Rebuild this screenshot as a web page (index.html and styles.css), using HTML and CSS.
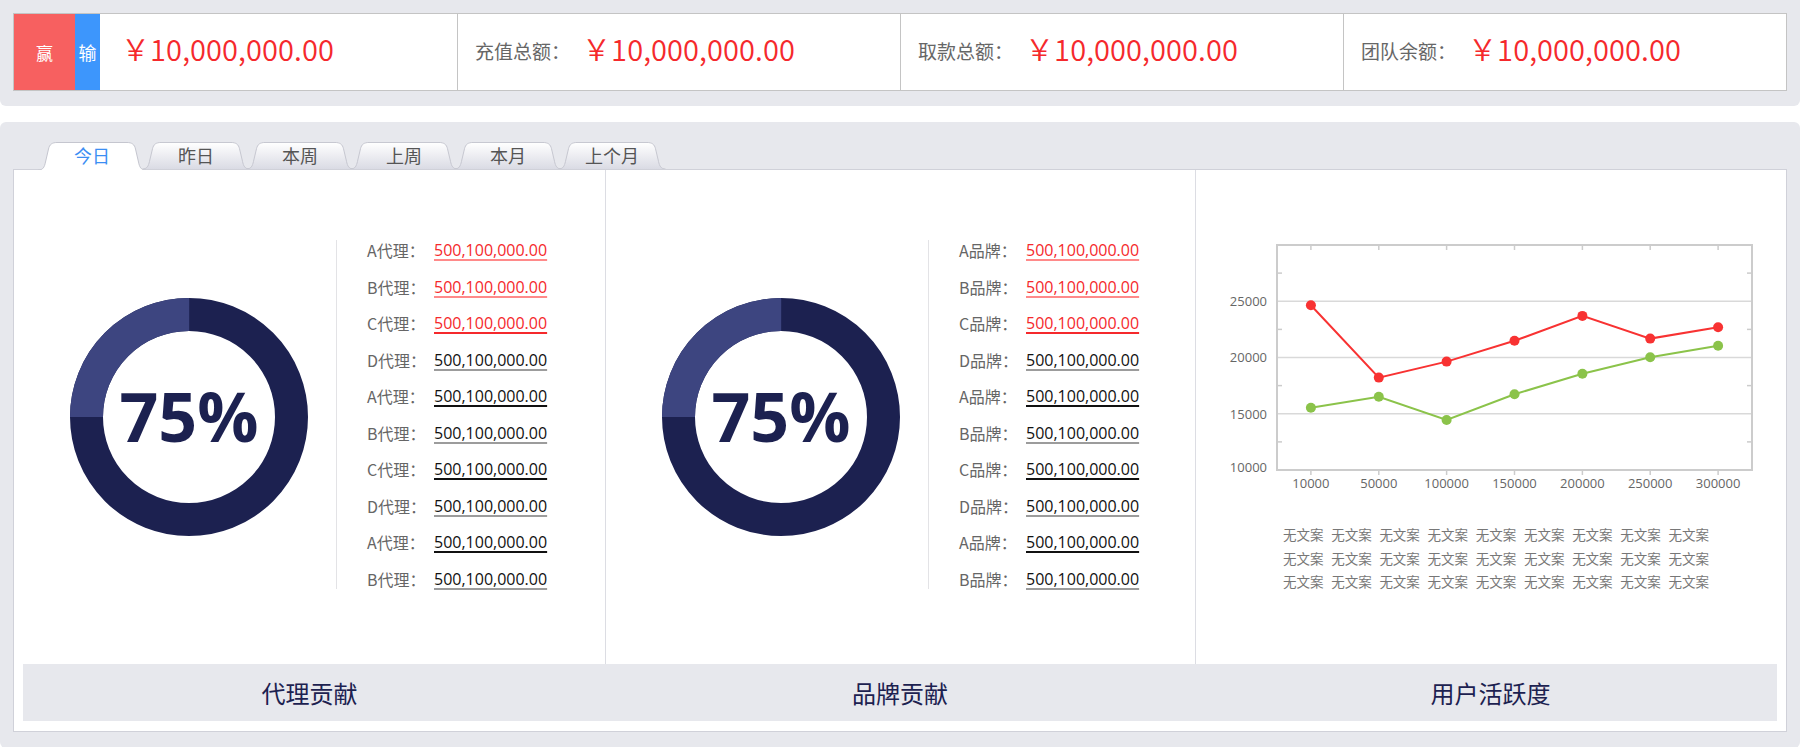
FILE: index.html
```html
<!DOCTYPE html>
<html lang="zh-CN">
<head>
<meta charset="utf-8">
<title>数据概览</title>
<link rel="stylesheet" href="styles.css">
</head>
<body>
<section class="panel panel-top">
  <div class="summary">
    <div class="cell cell-first">
      <span class="badge badge-win">赢</span>
      <span class="badge badge-lose">输</span>
      <span class="money money-main">￥10,000,000.00</span>
    </div>
    <div class="cell"><span class="cell-label">充值总额：</span><span class="money">￥10,000,000.00</span></div>
    <div class="cell"><span class="cell-label">取款总额：</span><span class="money">￥10,000,000.00</span></div>
    <div class="cell"><span class="cell-label">团队余额：</span><span class="money">￥10,000,000.00</span></div>
  </div>
</section>

<section class="panel panel-main">
  <nav class="tabs">
    <a class="tab active">
      <svg class="tab-bg" viewBox="0 0 108 28" preserveAspectRatio="none">
        <defs>
          <linearGradient id="tabg" x1="0" y1="0" x2="0" y2="1">
            <stop offset="0" stop-color="#ffffff"/>
            <stop offset="1" stop-color="#dadbe4"/>
          </linearGradient>
        </defs>
        <path class="tab-fill" d="M0.5 28 C5 28 6.5 25 7.5 20 L10.5 7 C11.5 2.5 14 0.5 19 0.5 L89 0.5 C94 0.5 96.5 2.5 97.5 7 L100.5 20 C101.5 25 103 28 107.5 28 Z"/>
        <path class="tab-line" d="M0.5 28 C5 28 6.5 25 7.5 20 L10.5 7 C11.5 2.5 14 0.5 19 0.5 L89 0.5 C94 0.5 96.5 2.5 97.5 7 L100.5 20 C101.5 25 103 28 107.5 28"/>
      </svg>
      <span class="tab-text">今日</span>
    </a>
    <a class="tab">
      <svg class="tab-bg" viewBox="0 0 108 28" preserveAspectRatio="none">
        <path class="tab-fill" d="M0.5 28 C5 28 6.5 25 7.5 20 L10.5 7 C11.5 2.5 14 0.5 19 0.5 L89 0.5 C94 0.5 96.5 2.5 97.5 7 L100.5 20 C101.5 25 103 28 107.5 28 Z"/>
        <path class="tab-line" d="M0.5 28 C5 28 6.5 25 7.5 20 L10.5 7 C11.5 2.5 14 0.5 19 0.5 L89 0.5 C94 0.5 96.5 2.5 97.5 7 L100.5 20 C101.5 25 103 28 107.5 28"/>
      </svg>
      <span class="tab-text">昨日</span>
    </a>
    <a class="tab">
      <svg class="tab-bg" viewBox="0 0 108 28" preserveAspectRatio="none">
        <path class="tab-fill" d="M0.5 28 C5 28 6.5 25 7.5 20 L10.5 7 C11.5 2.5 14 0.5 19 0.5 L89 0.5 C94 0.5 96.5 2.5 97.5 7 L100.5 20 C101.5 25 103 28 107.5 28 Z"/>
        <path class="tab-line" d="M0.5 28 C5 28 6.5 25 7.5 20 L10.5 7 C11.5 2.5 14 0.5 19 0.5 L89 0.5 C94 0.5 96.5 2.5 97.5 7 L100.5 20 C101.5 25 103 28 107.5 28"/>
      </svg>
      <span class="tab-text">本周</span>
    </a>
    <a class="tab">
      <svg class="tab-bg" viewBox="0 0 108 28" preserveAspectRatio="none">
        <path class="tab-fill" d="M0.5 28 C5 28 6.5 25 7.5 20 L10.5 7 C11.5 2.5 14 0.5 19 0.5 L89 0.5 C94 0.5 96.5 2.5 97.5 7 L100.5 20 C101.5 25 103 28 107.5 28 Z"/>
        <path class="tab-line" d="M0.5 28 C5 28 6.5 25 7.5 20 L10.5 7 C11.5 2.5 14 0.5 19 0.5 L89 0.5 C94 0.5 96.5 2.5 97.5 7 L100.5 20 C101.5 25 103 28 107.5 28"/>
      </svg>
      <span class="tab-text">上周</span>
    </a>
    <a class="tab">
      <svg class="tab-bg" viewBox="0 0 108 28" preserveAspectRatio="none">
        <path class="tab-fill" d="M0.5 28 C5 28 6.5 25 7.5 20 L10.5 7 C11.5 2.5 14 0.5 19 0.5 L89 0.5 C94 0.5 96.5 2.5 97.5 7 L100.5 20 C101.5 25 103 28 107.5 28 Z"/>
        <path class="tab-line" d="M0.5 28 C5 28 6.5 25 7.5 20 L10.5 7 C11.5 2.5 14 0.5 19 0.5 L89 0.5 C94 0.5 96.5 2.5 97.5 7 L100.5 20 C101.5 25 103 28 107.5 28"/>
      </svg>
      <span class="tab-text">本月</span>
    </a>
    <a class="tab">
      <svg class="tab-bg" viewBox="0 0 108 28" preserveAspectRatio="none">
        <path class="tab-fill" d="M0.5 28 C5 28 6.5 25 7.5 20 L10.5 7 C11.5 2.5 14 0.5 19 0.5 L89 0.5 C94 0.5 96.5 2.5 97.5 7 L100.5 20 C101.5 25 103 28 107.5 28 Z"/>
        <path class="tab-line" d="M0.5 28 C5 28 6.5 25 7.5 20 L10.5 7 C11.5 2.5 14 0.5 19 0.5 L89 0.5 C94 0.5 96.5 2.5 97.5 7 L100.5 20 C101.5 25 103 28 107.5 28"/>
      </svg>
      <span class="tab-text">上个月</span>
    </a>
  </nav>

  <div class="board">
    <div class="cols">
      <div class="col col-donut">
        <div class="donut">
          <svg class="donut-svg" viewBox="0 0 238 238">
            <circle cx="119" cy="119" r="102.5" fill="none" stroke="#1c2150" stroke-width="33"/>
            <circle cx="119" cy="119" r="102.5" fill="none" stroke="#3d4580" stroke-width="33" stroke-dasharray="161 700" transform="rotate(180 119 119)"/>
          </svg>
          <span class="donut-value">75%</span>
        </div>
        <ul class="list">
          <li class="row"><span class="row-label">A代理：</span><span class="amt red u-lightred">500,100,000.00</span></li>
          <li class="row"><span class="row-label">B代理：</span><span class="amt red u-lightred">500,100,000.00</span></li>
          <li class="row"><span class="row-label">C代理：</span><span class="amt red u-red">500,100,000.00</span></li>
          <li class="row"><span class="row-label">D代理：</span><span class="amt u-gray">500,100,000.00</span></li>
          <li class="row"><span class="row-label">A代理：</span><span class="amt u-dark">500,100,000.00</span></li>
          <li class="row"><span class="row-label">B代理：</span><span class="amt u-gray">500,100,000.00</span></li>
          <li class="row"><span class="row-label">C代理：</span><span class="amt u-dark">500,100,000.00</span></li>
          <li class="row"><span class="row-label">D代理：</span><span class="amt u-gray">500,100,000.00</span></li>
          <li class="row"><span class="row-label">A代理：</span><span class="amt u-dark">500,100,000.00</span></li>
          <li class="row"><span class="row-label">B代理：</span><span class="amt u-gray">500,100,000.00</span></li>
        </ul>
      </div>

      <div class="col col-donut col-divided">
        <div class="donut">
          <svg class="donut-svg" viewBox="0 0 238 238">
            <circle cx="119" cy="119" r="102.5" fill="none" stroke="#1c2150" stroke-width="33"/>
            <circle cx="119" cy="119" r="102.5" fill="none" stroke="#3d4580" stroke-width="33" stroke-dasharray="161 700" transform="rotate(180 119 119)"/>
          </svg>
          <span class="donut-value">75%</span>
        </div>
        <ul class="list">
          <li class="row"><span class="row-label">A品牌：</span><span class="amt red u-lightred">500,100,000.00</span></li>
          <li class="row"><span class="row-label">B品牌：</span><span class="amt red u-lightred">500,100,000.00</span></li>
          <li class="row"><span class="row-label">C品牌：</span><span class="amt red u-red">500,100,000.00</span></li>
          <li class="row"><span class="row-label">D品牌：</span><span class="amt u-gray">500,100,000.00</span></li>
          <li class="row"><span class="row-label">A品牌：</span><span class="amt u-dark">500,100,000.00</span></li>
          <li class="row"><span class="row-label">B品牌：</span><span class="amt u-gray">500,100,000.00</span></li>
          <li class="row"><span class="row-label">C品牌：</span><span class="amt u-dark">500,100,000.00</span></li>
          <li class="row"><span class="row-label">D品牌：</span><span class="amt u-gray">500,100,000.00</span></li>
          <li class="row"><span class="row-label">A品牌：</span><span class="amt u-dark">500,100,000.00</span></li>
          <li class="row"><span class="row-label">B品牌：</span><span class="amt u-gray">500,100,000.00</span></li>
        </ul>
      </div>

      <div class="col col-chart col-divided">
        <svg class="chart" viewBox="0 0 591 280" width="591" height="280">
          <g class="grid">
            <line x1="81" y1="80.25" x2="556" y2="80.25"/>
            <line x1="81" y1="136.5" x2="556" y2="136.5"/>
            <line x1="81" y1="192.75" x2="556" y2="192.75"/>
          </g>
          <g class="ticks">
            <line x1="81" y1="52.1" x2="86" y2="52.1"/>
            <line x1="81" y1="108.4" x2="86" y2="108.4"/>
            <line x1="81" y1="164.6" x2="86" y2="164.6"/>
            <line x1="81" y1="220.9" x2="86" y2="220.9"/>
            <line x1="551" y1="52.1" x2="556" y2="52.1"/>
            <line x1="551" y1="108.4" x2="556" y2="108.4"/>
            <line x1="551" y1="164.6" x2="556" y2="164.6"/>
            <line x1="551" y1="220.9" x2="556" y2="220.9"/>
            <line x1="114.9" y1="24" x2="114.9" y2="29"/>
            <line x1="182.8" y1="24" x2="182.8" y2="29"/>
            <line x1="250.6" y1="24" x2="250.6" y2="29"/>
            <line x1="318.5" y1="24" x2="318.5" y2="29"/>
            <line x1="386.4" y1="24" x2="386.4" y2="29"/>
            <line x1="454.2" y1="24" x2="454.2" y2="29"/>
            <line x1="522.1" y1="24" x2="522.1" y2="29"/>
            <line x1="114.9" y1="249" x2="114.9" y2="254"/>
            <line x1="182.8" y1="249" x2="182.8" y2="254"/>
            <line x1="250.6" y1="249" x2="250.6" y2="254"/>
            <line x1="318.5" y1="249" x2="318.5" y2="254"/>
            <line x1="386.4" y1="249" x2="386.4" y2="254"/>
            <line x1="454.2" y1="249" x2="454.2" y2="254"/>
            <line x1="522.1" y1="249" x2="522.1" y2="254"/>
          </g>
          <rect class="frame" x="81" y="24" width="475" height="225"/>
          <g class="ylabels">
            <text x="71" y="85">25000</text>
            <text x="71" y="141">20000</text>
            <text x="71" y="197.5">15000</text>
            <text x="71" y="251">10000</text>
          </g>
          <g class="xlabels">
            <text x="114.9" y="267">10000</text>
            <text x="182.8" y="267">50000</text>
            <text x="250.6" y="267">100000</text>
            <text x="318.5" y="267">150000</text>
            <text x="386.4" y="267">200000</text>
            <text x="454.2" y="267">250000</text>
            <text x="522.1" y="267">300000</text>
          </g>
          <polyline class="series-red" points="114.9,84.2 182.8,156.6 250.6,140.6 318.5,119.8 386.4,94.9 454.2,117.6 522.1,106.3"/>
          <g class="dots-red">
            <circle cx="114.9" cy="84.2" r="5"/>
            <circle cx="182.8" cy="156.6" r="5"/>
            <circle cx="250.6" cy="140.6" r="5"/>
            <circle cx="318.5" cy="119.8" r="5"/>
            <circle cx="386.4" cy="94.9" r="5"/>
            <circle cx="454.2" cy="117.6" r="5"/>
            <circle cx="522.1" cy="106.3" r="5"/>
          </g>
          <polyline class="series-green" points="114.9,186.7 182.8,175.7 250.6,199 318.5,173.3 386.4,152.7 454.2,136.3 522.1,124.7"/>
          <g class="dots-green">
            <circle cx="114.9" cy="186.7" r="5"/>
            <circle cx="182.8" cy="175.7" r="5"/>
            <circle cx="250.6" cy="199" r="5"/>
            <circle cx="318.5" cy="173.3" r="5"/>
            <circle cx="386.4" cy="152.7" r="5"/>
            <circle cx="454.2" cy="136.3" r="5"/>
            <circle cx="522.1" cy="124.7" r="5"/>
          </g>
        </svg>
        <div class="legend">
          <span>无文案</span><span>无文案</span><span>无文案</span><span>无文案</span><span>无文案</span><span>无文案</span><span>无文案</span><span>无文案</span><span>无文案</span>
          <span>无文案</span><span>无文案</span><span>无文案</span><span>无文案</span><span>无文案</span><span>无文案</span><span>无文案</span><span>无文案</span><span>无文案</span>
          <span>无文案</span><span>无文案</span><span>无文案</span><span>无文案</span><span>无文案</span><span>无文案</span><span>无文案</span><span>无文案</span><span>无文案</span>
        </div>
      </div>
    </div>
    <div class="footer">
      <div class="footer-cell footer-left">代理贡献</div>
      <div class="footer-cell">品牌贡献</div>
      <div class="footer-cell footer-right">用户活跃度</div>
    </div>
  </div>
</section>
</body>
</html>
```

FILE: styles.css
```css
* {
  box-sizing: border-box;
  margin: 0;
  padding: 0;
}

body {
  margin: 0;
  width: 1800px;
  background: #ffffff;
  font-family: "Noto Sans CJK SC", "Noto Sans", sans-serif;
  color: #333;
}

.panel {
  background: #e7e8ed;
}

.panel-top {
  padding: 13px 13px 15px;
  border-radius: 0 0 6px 6px;
}

.summary {
  display: grid;
  grid-template-columns: repeat(4, 1fr);
  height: 78px;
  border: 1px solid #c4c4c4;
  background: #ffffff;
}

.cell {
  display: flex;
  align-items: center;
  padding-left: 17px;
  border-left: 1px solid #c4c4c4;
  white-space: nowrap;
}

.cell-first {
  border-left: 0;
  padding-left: 0;
}

.badge {
  align-self: stretch;
  display: flex;
  align-items: center;
  justify-content: center;
  color: #ffffff;
}

.badge-win {
  width: 61px;
  background: #f76060;
  font-size: 17px;
}

.badge-lose {
  width: 25px;
  background: #3d96fc;
  font-size: 18px;
}

.money {
  color: #f5292c;
  font-size: 29px;
  font-weight: 350;
  line-height: 1;
  letter-spacing: 0.1px;
  margin-bottom: 7px;
}

.money-main {
  margin-left: 21px;
}

.cell-label {
  font-size: 19px;
  color: #666666;
  margin-right: 12px;
  margin-bottom: 3px;
}

.panel-main {
  margin-top: 16px;
  height: 626px;
  padding: 20px 13px 0;
  border-radius: 6px;
}

.tabs {
  display: flex;
  height: 27px;
  padding-left: 25px;
}

.tab {
  position: relative;
  display: flex;
  justify-content: center;
  width: 108px;
  height: 27px;
  margin-right: -4px;
  font-size: 18px;
  line-height: 27px;
  color: #555555;
}

.tab.active {
  height: 28px;
  z-index: 2;
  color: #3b8ef3;
}

.tab-bg {
  position: absolute;
  left: 0;
  top: 0;
  width: 100%;
  height: 100%;
}

.tab-fill {
  fill: url(#tabg);
}

.tab.active .tab-fill {
  fill: #ffffff;
}

.tab-line {
  fill: none;
  stroke: #c5c6cf;
  stroke-width: 1;
}

.tab-text {
  position: relative;
}

.board {
  background: #ffffff;
  border: 1px solid #d0d1d9;
  padding-bottom: 10px;
}

.cols {
  display: grid;
  grid-template-columns: 591px 590px 591px;
  height: 494px;
}

.col-divided {
  border-left: 1px solid #dcdde3;
}

.col-donut {
  display: flex;
  align-items: center;
  padding-left: 56px;
}

.donut {
  display: grid;
  width: 238px;
  height: 238px;
  place-items: center;
}

.donut-svg {
  grid-area: 1 / 1;
  width: 238px;
  height: 238px;
}

.donut-value {
  grid-area: 1 / 1;
  font-family: "Open Sans", "Noto Sans", sans-serif;
  font-weight: 700;
  font-size: 68px;
  line-height: 1;
  color: #1c2150;
  margin-top: -2px;
}

.list {
  list-style: none;
  display: flex;
  flex-direction: column;
  gap: 16.5px;
  margin-left: 28px;
  margin-bottom: 5px;
  padding-left: 30px;
  border-left: 1px solid #e3e3e6;
}

.row {
  display: flex;
  height: 20px;
  line-height: 20px;
  font-size: 16px;
  white-space: nowrap;
}

.row-label {
  width: 67px;
  color: #666666;
}

.amt {
  font-family: "Open Sans", "Noto Sans", sans-serif;
  font-size: 16px;
  color: #111111;
  text-decoration: underline;
  text-decoration-thickness: 2px;
  text-underline-offset: 3px;
}

.amt.red {
  color: #f5292c;
}

.u-lightred { text-decoration-color: #ff8a8a; }
.u-red { text-decoration-color: #f5292c; }
.u-gray { text-decoration-color: #9c9c9c; }
.u-dark { text-decoration-color: #111111; }

.col-chart {
  display: flex;
  flex-direction: column;
  padding-top: 51px;
}

.chart {
  display: block;
  font-family: "Open Sans", "Noto Sans", sans-serif;
}

.chart .grid line {
  stroke: #d9d9d9;
  stroke-width: 1.5;
}

.chart .ticks line {
  stroke: #cccccc;
  stroke-width: 1.5;
}

.chart .frame {
  fill: none;
  stroke: #cccccc;
  stroke-width: 2;
}

.chart text {
  font-size: 13px;
  fill: #666666;
}

.chart .ylabels text {
  text-anchor: end;
}

.chart .xlabels text {
  text-anchor: middle;
}

.series-red {
  fill: none;
  stroke: #f83232;
  stroke-width: 2;
}

.dots-red circle {
  fill: #f83232;
}

.series-green {
  fill: none;
  stroke: #8bc34a;
  stroke-width: 2;
}

.dots-green circle {
  fill: #8bc34a;
}

.legend {
  display: grid;
  grid-template-columns: repeat(9, 48.2px);
  margin-top: 22px;
  padding-left: 87px;
  font-size: 13.5px;
  line-height: 23.5px;
  color: #777777;
  white-space: nowrap;
}

.footer {
  display: grid;
  grid-template-columns: 582px 590px 582px;
  height: 57px;
  margin: 0 9px;
  background: #e7e8ed;
}

.footer-cell {
  text-align: center;
  font-size: 24px;
  line-height: 57px;
  color: #1c2150;
}

.footer-left {
  padding-right: 9px;
}

.footer-right {
  padding-left: 9px;
}
```
